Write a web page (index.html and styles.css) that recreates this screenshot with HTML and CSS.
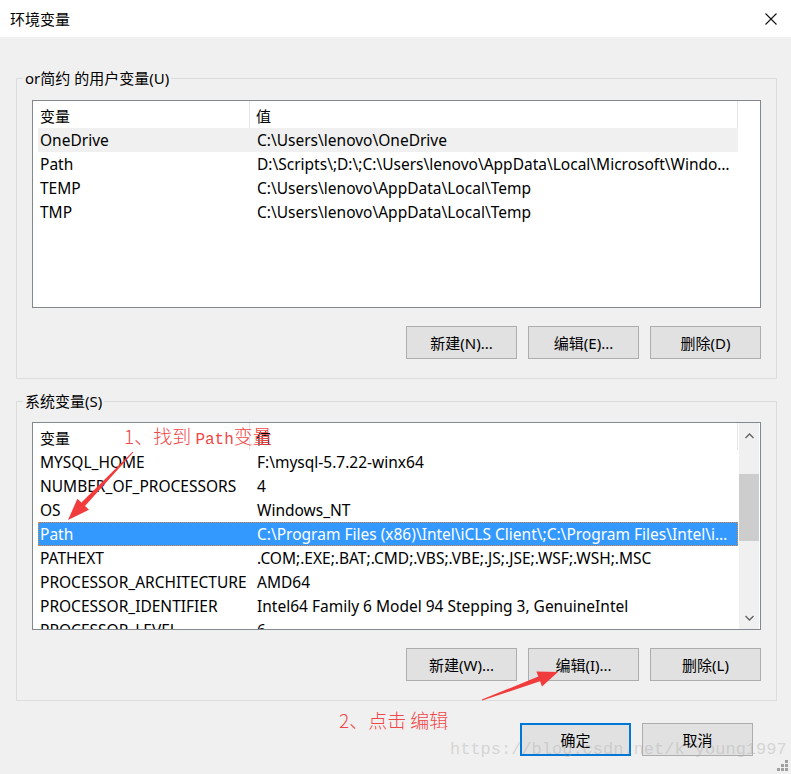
FILE: index.html
```html
<!DOCTYPE html>
<html lang="zh-CN">
<head>
  <meta charset="UTF-8">
  <title>环境变量</title>
  <link rel="stylesheet" href="styles.css">
</head>
<body>

  <div class="dialog">

    <!-- Title bar -->
    <div class="titlebar">
      <span class="title">环境变量</span>
      <svg class="close" width="12" height="12" viewBox="0 0 12 12">
        <path d="M0.5 0.5 L11.5 11.5 M11.5 0.5 L0.5 11.5" stroke="#111" stroke-width="1.1" fill="none"/>
      </svg>
    </div>

    <div class="content">

      <!-- User variables -->
      <fieldset class="group group-user">
        <legend>or简约 的用户变量(U)</legend>
        <div class="list">
          <div class="list-main">
            <div class="list-head">
              <div class="head-name">变量</div>
              <div class="head-value">值</div>
            </div>
            <div class="row hover"><div class="cell">OneDrive</div><div class="cell">C:\Users\lenovo\OneDrive</div></div>
            <div class="row"><div class="cell">Path</div><div class="cell">D:\Scripts\;D:\;C:\Users\lenovo\AppData\Local\Microsoft\WindowsApps;C:\Program Files</div></div>
            <div class="row"><div class="cell">TEMP</div><div class="cell">C:\Users\lenovo\AppData\Local\Temp</div></div>
            <div class="row"><div class="cell">TMP</div><div class="cell">C:\Users\lenovo\AppData\Local\Temp</div></div>
          </div>
        </div>
        <div class="btn-row">
          <button class="btn">新建(N)...</button>
          <button class="btn">编辑(E)...</button>
          <button class="btn">删除(D)</button>
        </div>
      </fieldset>

      <!-- System variables -->
      <fieldset class="group group-sys">
        <legend>系统变量(S)</legend>
        <div class="list">
          <div class="list-main">
            <div class="list-head">
              <div class="head-name">变量</div>
              <div class="head-value">值</div>
            </div>
            <div class="row"><div class="cell">MYSQL_HOME</div><div class="cell">F:\mysql-5.7.22-winx64</div></div>
            <div class="row"><div class="cell">NUMBER_OF_PROCESSORS</div><div class="cell">4</div></div>
            <div class="row"><div class="cell">OS</div><div class="cell">Windows_NT</div></div>
            <div class="row selected"><div class="cell">Path</div><div class="cell">C:\Program Files (x86)\Intel\iCLS Client\;C:\Program Files\Intel\iCLS Client\;C:\Windows</div></div>
            <div class="row"><div class="cell">PATHEXT</div><div class="cell">.COM;.EXE;.BAT;.CMD;.VBS;.VBE;.JS;.JSE;.WSF;.WSH;.MSC</div></div>
            <div class="row"><div class="cell">PROCESSOR_ARCHITECTURE</div><div class="cell">AMD64</div></div>
            <div class="row"><div class="cell">PROCESSOR_IDENTIFIER</div><div class="cell">Intel64 Family 6 Model 94 Stepping 3, GenuineIntel</div></div>
            <div class="row"><div class="cell">PROCESSOR_LEVEL</div><div class="cell">6</div></div>
          </div>
          <div class="scrollbar">
            <div class="sb-arrow">
              <svg width="9" height="6" viewBox="0 0 9 6"><path d="M0.5 5 L4.5 1 L8.5 5" stroke="#606060" stroke-width="1.3" fill="none"/></svg>
            </div>
            <div class="sb-track"><div class="sb-thumb"></div></div>
            <div class="sb-arrow down">
              <svg width="9" height="6" viewBox="0 0 9 6"><path d="M0.5 1 L4.5 5 L8.5 1" stroke="#606060" stroke-width="1.3" fill="none"/></svg>
            </div>
          </div>
        </div>
        <div class="btn-row">
          <button class="btn">新建(W)...</button>
          <button class="btn">编辑(I)...</button>
          <button class="btn">删除(L)</button>
        </div>
      </fieldset>

      <!-- OK / Cancel -->
      <div class="footer">
        <button class="btn btn-default">确定</button>
        <button class="btn">取消</button>
      </div>
    </div>

    <!-- Annotations drawn over the screenshot -->
    <div class="note note-1">1、找到 <span class="latin">Path</span>变量</div>
    <div class="note note-2">2、点击 编辑</div>
    <svg class="arrows" width="791" height="774" viewBox="0 0 791 774">
      <polygon fill="#f03c3c" points="133.4,452.3 85,505.9 89,509.7 68,520 77.4,498.7 81.4,502.5 132.6,451.7"/>
      <polygon fill="#f03c3c" points="482.2,700.5 540.1,681.2 542,686.4 558,672 536.4,671.4 538.3,676.6 481.8,699.5"/>
    </svg>
    <div class="watermark">https://blog.csdn.net/k_young1997</div>

    <!-- Resize grip -->
    <svg class="grip" width="11" height="11" viewBox="0 0 11 11">
      <rect x="8" y="0" width="3" height="3" fill="#a0a0a0"/>
      <rect x="4" y="4" width="3" height="3" fill="#a0a0a0"/>
      <rect x="8" y="4" width="3" height="3" fill="#a0a0a0"/>
      <rect x="0" y="8" width="3" height="3" fill="#a0a0a0"/>
      <rect x="4" y="8" width="3" height="3" fill="#a0a0a0"/>
      <rect x="8" y="8" width="3" height="3" fill="#a0a0a0"/>
    </svg>
  </div>

</body>
</html>
```

FILE: styles.css
```css
body {
  margin: 0;
  background-color: #f0f0f0;
  font-family: 'Noto Sans', 'Noto Sans CJK SC', sans-serif;
  font-size: 15px;
  color: #000;
}

.dialog {
  position: relative;
  width: 791px;
  height: 774px;
  background: #f0f0f0;
  overflow: hidden;
}

.titlebar {
  height: 37px;
  background: #fff;
  display: flex;
  align-items: center;
  justify-content: space-between;
  padding: 0 14px 0 10px;
  box-sizing: border-box;
}

.title {
  font-size: 15px;
  line-height: 20px;
}

.content {
  padding: 31px 14px 0 16px;
}

.group {
  margin: 0;
  border: 1px solid #dcdcdc;
  padding: 12px 15px 19px 15px;
  width: 761px;
  box-sizing: border-box;
}

.group legend {
  padding: 0 2px;
  margin-left: -9px;
  line-height: 20px;
  font-size: 15px;
}

.group-sys {
  margin-top: 12px;
  padding-top: 11px;
}

/* List view */
.list {
  height: 208px;
  border: 1px solid #828790;
  background: #fff;
  box-sizing: border-box;
  display: flex;
  overflow: hidden;
}

.list-main {
  width: 705px;
  padding-left: 5px;
  box-sizing: border-box;
}

.list-head {
  display: flex;
  height: 27px;
}

.head-name,
.head-value {
  line-height: 24px;
  padding-top: 3px;
  border-right: 1px solid #e5e5e5;
  box-sizing: border-box;
}

.head-name {
  width: 212px;
  padding-left: 2px;
}

.head-value {
  width: 488px;
  padding-left: 6px;
}

.row {
  display: flex;
  height: 24px;
  line-height: 24px;
  width: 700px;
  font-size: 15.5px;
  box-sizing: border-box;
}

.row .cell {
  padding-left: 2px;
  white-space: nowrap;
  overflow: hidden;
  text-overflow: ellipsis;
  box-sizing: border-box;
}

.row .cell:first-child {
  width: 217px;
}

.row .cell:last-child {
  width: 483px;
  padding-right: 8px;
}

.row.hover {
  background: #f0f0f0;
}

.row.selected {
  background: #3399ff;
  color: #fff;
  outline: 1px dotted #e8893a;
  outline-offset: -1px;
}

/* Scroll bar */
.scrollbar {
  width: 20px;
  margin-left: 1px;
  background: #f0f0f0;
  display: flex;
  flex-direction: column;
}

.sb-arrow {
  height: 25px;
  display: flex;
  align-items: center;
  justify-content: center;
}

.sb-arrow.down {
  height: 23px;
}

.sb-track {
  flex: 1;
}

.sb-thumb {
  margin-top: 26px;
  height: 67px;
  background: #cdcdcd;
}

/* Buttons */
.btn-row {
  display: flex;
  justify-content: flex-end;
  gap: 11px;
  margin-top: 18px;
}

.btn {
  width: 111px;
  height: 33px;
  background: #e1e1e1;
  border: 1px solid #adadad;
  font-family: 'Noto Sans', 'Noto Sans CJK SC', sans-serif;
  font-size: 15px;
  color: #000;
  padding: 0;
  box-sizing: border-box;
}

.btn-default {
  border: 2px solid #0078d7;
}

.footer {
  display: flex;
  justify-content: flex-end;
  gap: 11px;
  margin-top: 22px;
  padding-right: 24px;
}

/* Annotations */
.note {
  position: absolute;
  color: #f04848;
  font-family: 'Noto Sans CJK SC', sans-serif;
  font-size: 19px;
  line-height: 24px;
  font-weight: 300;
}

.note .latin {
  font-family: 'Liberation Mono', monospace;
  font-size: 16px;
}

.note-1 {
  left: 124px;
  top: 424px;
}

.note-2 {
  left: 339px;
  top: 708px;
}

.arrows {
  position: absolute;
  left: 0;
  top: 0;
  pointer-events: none;
}

.watermark {
  position: absolute;
  left: 450px;
  top: 738px;
  font-family: 'Liberation Mono', monospace;
  font-size: 17px;
  line-height: 24px;
  color: rgba(170, 170, 170, 0.4);
}

.grip {
  position: absolute;
  right: 3px;
  bottom: 3px;
}
```
